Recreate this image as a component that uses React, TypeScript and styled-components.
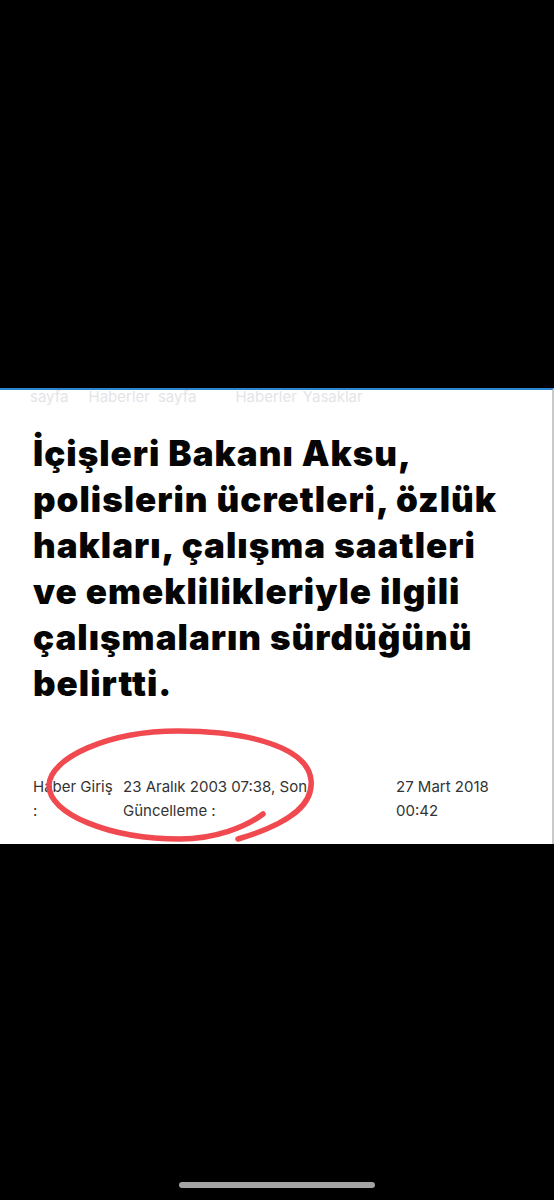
import React from "react";
import styled, { createGlobalStyle } from "styled-components";

const GlobalStyle = createGlobalStyle`
  html, body {
    margin: 0;
    padding: 0;
    background: #000;
  }
  body {
    font-family: Inter, "Noto Sans", Arial, sans-serif;
  }
`;

const Screen = styled.div`
  width: 554px;
  height: 1200px;
  background: #000;
  display: flex;
  flex-direction: column;
  overflow: hidden;
`;

const TopSpace = styled.div`
  height: 388px;
  flex-shrink: 0;
`;

const Panel = styled.div`
  height: 456px;
  background: #fff;
  border-top: 2px solid #2f86d0;
  border-right: 2px solid #c9c9c9;
  box-sizing: border-box;
  overflow: hidden;
  display: flex;
  flex-direction: column;
`;

const Breadcrumbs = styled.div`
  display: flex;
  padding-left: 30px;
  height: 16px;
  font-size: 15px;
  line-height: 14px;
  color: #e4e4e8;
  white-space: nowrap;
`;

const Crumb = styled.span<{ $gap: number }>`
  margin-left: ${(p) => p.$gap}px;
`;

const Title = styled.h1`
  margin: 24px 0 0 0;
  padding: 0 46px 0 33px;
  font-family: Inter, "Noto Sans", Arial, sans-serif;
  font-weight: 900;
  font-size: 35px;
  line-height: 46px;
  letter-spacing: 1px;
  color: #050505;
`;

const Meta = styled.div`
  position: relative;
  margin-top: 69px;
  padding-left: 33px;
  display: grid;
  grid-template-columns: 90px 273px 1fr;
  font-size: 15px;
  line-height: 24px;
  color: #333;
`;

const Cell = styled.div<{ $clip?: number }>`
  display: flex;
  flex-direction: column;
  white-space: nowrap;
  overflow: hidden;
  ${(p) => (p.$clip ? `max-width: ${p.$clip}px;` : "")}
`;

const Circle = styled.svg`
  position: absolute;
  left: 0;
  top: -47px;
  pointer-events: none;
`;

const HomeBar = styled.div`
  margin: auto auto 12px auto;
  width: 196px;
  height: 6px;
  border-radius: 3px;
  background: #a3a3a3;
`;

const crumbs = [
  { text: "sayfa", gap: 0 },
  { text: "Haberler", gap: 20 },
  { text: "sayfa", gap: 8 },
  { text: "Haberler", gap: 39 },
  { text: "Yasaklar", gap: 6 },
];

export default function App() {
  return (
    <Screen>
      <GlobalStyle />
      <TopSpace />
      <Panel>
        <Breadcrumbs>
          {crumbs.map((c, i) => (
            <Crumb key={i} $gap={c.gap}>
              {c.text}
            </Crumb>
          ))}
        </Breadcrumbs>
        <Title>
          İçişleri Bakanı Aksu, polislerin ücretleri, özlük hakları, çalışma
          saatleri ve emeklilikleriyle ilgili çalışmaların sürdüğünü belirtti.
        </Title>
        <Meta>
          <Cell>
            <span>Haber Giriş</span>
            <span>:</span>
          </Cell>
          <Cell $clip={188}>
            <span>23 Aralık 2003 07:38, Son</span>
            <span>Güncelleme :</span>
          </Cell>
          <Cell>
            <span>27 Mart 2018</span>
            <span>00:42</span>
          </Cell>
          <Circle width="554" height="120" viewBox="0 0 554 120">
            <path
              d="M 238 111 C 282 98, 314 80, 311 52 C 308 20, 250 3, 178 3 C 108 3, 50 30, 49 57 C 48 86, 110 111, 180 111 C 215 111, 246 99, 263 86"
              fill="none"
              stroke="#f04a50"
              strokeWidth="5.5"
              strokeLinecap="round"
            />
          </Circle>
        </Meta>
      </Panel>
      <HomeBar />
    </Screen>
  );
}
